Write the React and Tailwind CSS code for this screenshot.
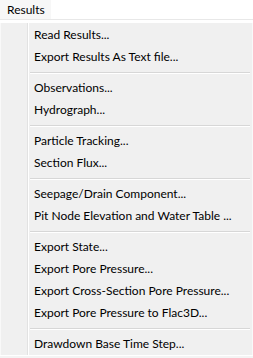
const groups = [
  ["Read Results...", "Export Results As Text file..."],
  ["Observations...", "Hydrograph..."],
  ["Particle Tracking...", "Section Flux..."],
  ["Seepage/Drain Component...", "Pit Node Elevation and Water Table ..."],
  [
    "Export State...",
    "Export Pore Pressure...",
    "Export Cross-Section Pore Pressure...",
    "Export Pore Pressure to Flac3D...",
  ],
  ["Drawdown Base Time Step..."],
];

const App = () => {
  return (
    <div
      className="w-[253px] h-[358px] bg-white text-[12px] text-black overflow-hidden"
      style={{ fontFamily: 'Lato, "Noto Sans", sans-serif' }}
    >
      {/* Menu bar */}
      <div className="flex h-[19px] bg-white">
        <div className="flex items-center px-[7px] w-[51px] bg-[#f7f7f7]">Results</div>
      </div>
      <div className="h-[1px] bg-[#e8e8e8]" />
      <div className="h-[3px] bg-white" />

      {/* Dropdown */}
      <div className="relative flex h-[332px] bg-[#f0f0f0] border-l border-r border-[#f9f9f9]">
        {/* Icon column */}
        <div className="w-[26px] shrink-0" />
        <div className="w-[1px] bg-[#e2e2e2]" />
        <div className="w-[1px] bg-white" />

        <div className="flex-1 flex flex-col pt-[1px]">
          {groups.map((group, gi) => (
            <div key={gi}>
              {gi > 0 && (
                <div className="h-[9px] flex flex-col justify-center pl-[1px] pr-[2px]">
                  <div className="h-[1px] bg-[#d7d7d7]" />
                  <div className="h-[1px] bg-white" />
                </div>
              )}
              {group.map((item) => (
                <div key={item} className="h-[22px] flex items-center pl-[5px] leading-none whitespace-nowrap">
                  {item}
                </div>
              ))}
            </div>
          ))}
        </div>
      </div>
      <div className="h-[1px] bg-white" />
      <div className="h-[2px] bg-[#f4f4f4]" />
    </div>
  );
};

export default App;
